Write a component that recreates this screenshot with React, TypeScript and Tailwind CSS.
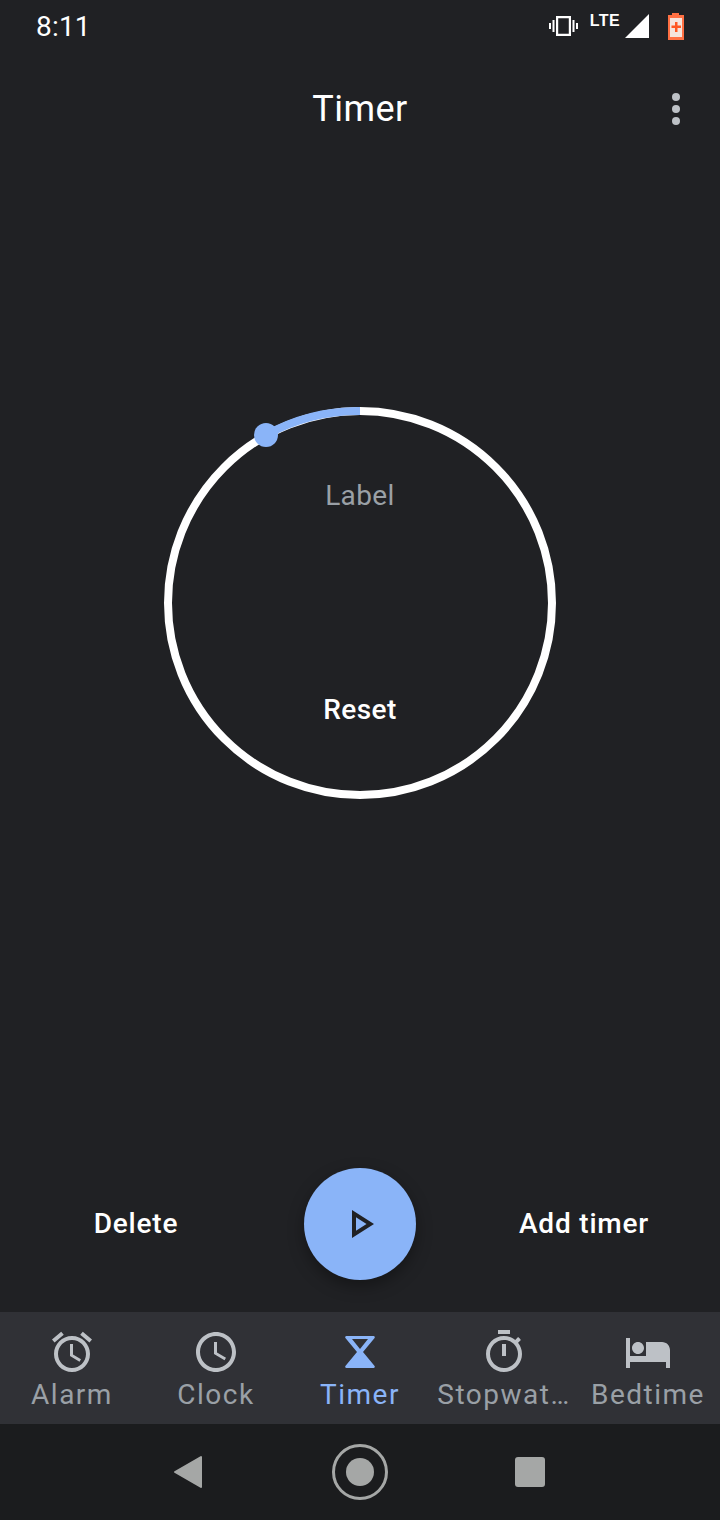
const navItems = [
  {
    label: 'Alarm',
    d: 'M22 5.72l-4.6-3.86-1.29 1.53 4.6 3.86L22 5.72zM7.88 3.39L6.6 1.86 2 5.71l1.29 1.53 4.59-3.85zM12.5 8H11v6l4.75 2.85.75-1.23-4-2.37V8zM12 4c-4.97 0-9 4.03-9 9s4.03 9 9 9 9-4.03 9-9-4.03-9-9-9zm0 16c-3.87 0-7-3.13-7-7s3.13-7 7-7 7 3.13 7 7-3.13 7-7 7z',
  },
  {
    label: 'Clock',
    d: 'M11.99 2C6.47 2 2 6.48 2 12s4.47 10 9.99 10C17.52 22 22 17.52 22 12S17.52 2 11.99 2zM12 20c-4.42 0-8-3.58-8-8s3.58-8 8-8 8 3.58 8 8-3.58 8-8 8zm.5-13H11v6l5.25 3.15.75-1.23-4.5-2.67z',
  },
  {
    label: 'Timer',
    active: true,
    d: 'M5.200 4h13.600c.5 0 .8.6.5 1L13.500 12l5.800 7c.3.4 0 1-.5 1H5.200c-.5 0-.8-.6-.5-1l5.800-7-5.800-7c-.3-.4 0-1 .5-1zM8 5.500L12 10.500l4-5z',
  },
  {
    label: 'Stopwat…',
    d: 'M15 1H9v2h6V1zm-4 13h2V8h-2v6zm8.03-6.61l1.42-1.42c-.43-.51-.9-.99-1.41-1.41l-1.42 1.42C16.07 4.74 14.12 4 12 4c-4.97 0-9 4.03-9 9s4.02 9 9 9 9-4.03 9-9c0-2.12-.74-4.07-1.97-5.61zM12 20c-3.87 0-7-3.13-7-7s3.13-7 7-7 7 3.13 7 7-3.13 7-7 7z',
  },
  {
    label: 'Bedtime',
    d: 'M7 13c1.66 0 3-1.34 3-3S8.66 7 7 7s-3 1.34-3 3 1.34 3 3 3zm12-6h-8v7H3V5H1v15h2v-3h18v3h2v-9c0-2.21-1.79-4-4-4z',
  },
]

function StatusBar() {
  return (
    <div className="h-12 flex items-center justify-between pl-9 pr-[35px] text-white">
      <span className="text-[28px] leading-none tracking-[0.2px] font-['Roboto',sans-serif] mt-[6px]">8:11</span>
      <div className="flex items-start self-start pt-[13px]">
        <svg width="29" height="24" viewBox="0 0 29 24" fill="#fff" className="mr-[12px] mt-[1px]">
          <path d="M7 2h15v20H7zM9.200 4.200v15.600h10.600V4.200z" fillRule="evenodd" />
          <path d="M3.500 6h2v12h-2zM23.500 6h2v12h-2zM0 9h2v6H0zM27 9h2v6h-2z" />
        </svg>
        <span className="text-[16px] font-bold leading-none tracking-[0.4px] font-['Liberation_Sans',sans-serif] mr-[4px]">LTE</span>
        <svg width="26" height="26" viewBox="0 0 26 26" className="mr-[17px] mt-[1px]">
          <path d="M25 0v24H1z" fill="#fff" />
        </svg>
        <svg width="18" height="27" viewBox="0 0 18 27">
          <path d="M5 0h7v2h5v25H1V2h4z" fill="#ff7043" />
          <rect x="3" y="5" width="12" height="19" fill="#f5e4dc" />
          <path d="M8 9h2.500v3.500H14V15h-3.500v4H8v-4H4.500v-2.500H8z" fill="#ff5722" />
        </svg>
      </div>
    </div>
  )
}

function Dial() {
  return (
    <div className="relative w-[392px] h-[392px] mx-auto mt-[239px] flex flex-col items-center">
      <svg width="392" height="392" viewBox="0 0 392 392" fill="none" className="absolute inset-0">
        <circle cx="196" cy="196" r="192" stroke="#fff" strokeWidth="8" />
        <path d="M196 4A192 192 0 0 0 102 28" stroke="#8ab4f8" strokeWidth="8" />
        <circle cx="102" cy="28" r="12" fill="#8ab4f8" />
      </svg>
      <span className="mt-[72px] text-[28px] leading-[34px] tracking-[0.4px] text-[#9aa0a6] font-['Roboto',sans-serif]">Label</span>
      <span className="mt-[180px] text-[28px] leading-[34px] tracking-[0.4px] font-medium text-white font-['Roboto',sans-serif]">Reset</span>
    </div>
  )
}

function Actions() {
  return (
    <div className="grid grid-cols-[272px_176px_272px] items-center pb-8 text-[28px] tracking-[0.8px] font-medium text-white font-['Roboto',sans-serif]">
      <button className="text-center">Delete</button>
      <div className="flex justify-center">
        <button className="w-28 h-28 rounded-full bg-[#8ab4f8] flex items-center justify-center shadow-[0_6px_16px_rgba(0,0,0,0.35)]">
          <svg width="48" height="48" viewBox="0 0 24 24" fill="#202124">
            <path d="M10 8.640L15.270 12 10 15.360V8.640M8 5v14l11-7L8 5z" />
          </svg>
        </button>
      </div>
      <button className="text-center">Add timer</button>
    </div>
  )
}

function BottomNav() {
  return (
    <div className="h-28 bg-[#303136] grid grid-cols-5">
      {navItems.map((item) => (
        <div key={item.label} className="flex flex-col items-center pt-4">
          <svg width="48" height="48" viewBox="0 0 24 24" fill={item.active ? '#8ab4f8' : '#bdc1c6'}>
            <path d={item.d} />
          </svg>
          <span className={`text-[28px] leading-[32px] mt-[3px] tracking-[1.5px] whitespace-nowrap font-['Roboto',sans-serif] ${item.active ? 'text-[#8ab4f8]' : 'text-[#9aa0a6]'}`}>
            {item.label}
          </span>
        </div>
      ))}
    </div>
  )
}

function SystemNav() {
  return (
    <div className="h-24 bg-[#1b1c1e] flex items-center justify-center gap-[127px] pr-[3px]">
      <svg width="33" height="34" viewBox="0 0 33 34">
        <path d="M29 2v30L3 17z" fill="#a5a7a6" stroke="#a5a7a6" strokeWidth="2" strokeLinejoin="round" />
      </svg>
      <div className="w-14 h-14 rounded-full border-[3px] border-[#a5a7a6] flex items-center justify-center">
        <div className="w-7 h-7 rounded-full bg-[#a5a7a6]" />
      </div>
      <div className="w-[30px] h-[30px] rounded-[3px] bg-[#a5a7a6]" />
    </div>
  )
}

export default function App() {
  return (
    <div className="w-[720px] h-[1520px] bg-[#202124] flex flex-col overflow-hidden">
      <StatusBar />
      <header className="h-[120px] relative flex items-center justify-center">
        <h1 className="text-[36px] tracking-[0.5px] mt-[2px] text-white font-['Roboto',sans-serif]">Timer</h1>
        <div className="absolute right-[40px] top-[45px] flex flex-col gap-1">
          <span className="w-2 h-2 rounded-full bg-[#bdc1c6]" />
          <span className="w-2 h-2 rounded-full bg-[#bdc1c6]" />
          <span className="w-2 h-2 rounded-full bg-[#bdc1c6]" />
        </div>
      </header>
      <main className="flex-1 flex flex-col justify-between">
        <Dial />
        <Actions />
      </main>
      <BottomNav />
      <SystemNav />
    </div>
  )
}
